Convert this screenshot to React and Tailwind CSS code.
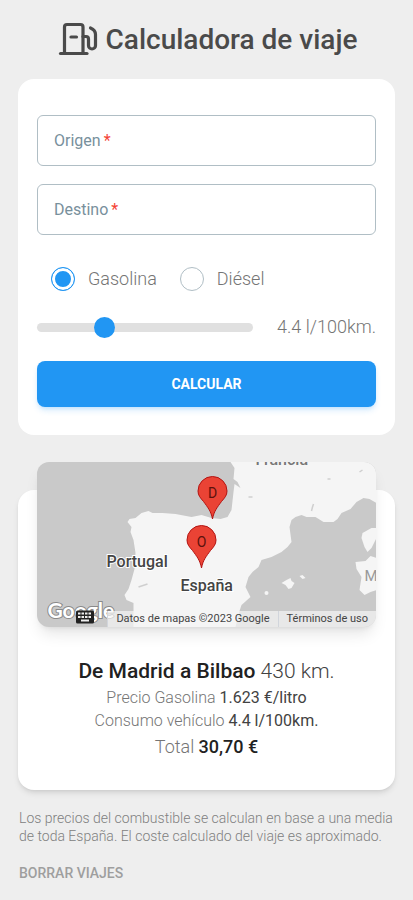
import { useState } from "react";

const FUELS = [
  { id: "gasolina", label: "Gasolina" },
  { id: "diesel", label: "Diésel" },
];

function FuelPumpIcon() {
  return (
    <svg className="w-10 h-9 shrink-0" viewBox="0 0 40 36" fill="none" stroke="currentColor" strokeWidth="3.2" strokeLinecap="round" strokeLinejoin="round" aria-hidden="true">
      <path d="M6.5 31.5V5a2.500 2.500 0 0 1 2.500-2.500h13.500a2.500 2.500 0 0 1 2.500 2.500v26.500" />
      <path d="M2.500 31.500h26.500" />
      <path d="M13 15h5.500" />
      <path d="M25 14.500h3a2.500 2.500 0 0 1 2.500 2.500v6.500a3.500 3.500 0 0 0 7 0V12.500c0-3.500-1.500-5-5-6.500" />
    </svg>
  );
}

function KeyboardIcon() {
  return (
    <svg className="w-5 h-3.5" viewBox="0 0 20 14" aria-hidden="true">
      <rect x="1" y="0.500" width="18" height="13" rx="1.500" fill="#222" />
      <path d="M3 3.500h14M3 7h14" stroke="#eee" strokeWidth="2.200" strokeDasharray="2.500 1" />
      <path d="M6 10.500h8" stroke="#eee" strokeWidth="1.800" />
    </svg>
  );
}

function TextField({ id, label }) {
  return (
    <div className="relative">
      <input
        id={id}
        type="text"
        required
        placeholder=" "
        className="peer block w-full h-[51px] px-4 rounded-md border border-[#b0bec5] bg-white text-base text-gray-700 outline-none focus:border-[#2196f3]"
      />
      <label
        htmlFor={id}
        className="absolute left-[17px] inset-y-0 flex items-center gap-[3px] text-base text-[#78909c] pointer-events-none peer-[:not(:placeholder-shown)]:hidden"
      >
        {label}
        <span className="text-[#f44336]">*</span>
      </label>
    </div>
  );
}

function Pin({ x, y, letter }) {
  return (
    <g transform={`translate(${x} ${y})`}>
      <path
        d="M0 0C-1.500-8-5-12-9-17.500C-12-21-14.500-23.500-14.500-28a14.500 14.500 0 0 1 29 0C14.500-23.500 12-21 9-17.500C5-12 1.500-8 0 0Z"
        fill="#ea4335"
        stroke="#b31412"
        strokeWidth="1"
      />
      <text y="-21" textAnchor="middle" fontSize="14" fontWeight="400" fill="#5c120c">
        {letter}
      </text>
    </g>
  );
}

function TripMap() {
  return (
    <div className="relative mx-[19px] h-[165px] rounded-xl overflow-hidden bg-[#c9c9c9] shadow-lg">
      <svg className="block w-full h-full" viewBox="0 0 340 165" preserveAspectRatio="xMidYMid slice" role="img" aria-label="Mapa del viaje">
        <g fill="#f5f5f5">
          <path d="M97 165V141L90 138L88 133L92 127L95 118L98 107L99 91L97 78L94 70L95 65L91 60L93 57L99 56L105 51L112 49L116 51L126 51L139 52L155 55L165 53L175 56L184 57L191 55L195 48L197 30L198 22L204 26L201 20L197 17L198 6L194 0H340V41L333 37L327 36L320 40L314 47L305 51L301 57L297 60L287 60L279 55L270 55L265 53L259 55L255 58L253 65L255 80L251 85L245 90L235 95L225 98L222 105L216 110L212 115L209 125L214 135L205 143L202 152L199 165Z" />
          <path d="M335 66L326 71L325 76L328 85L331 90L335 86L340 76V66Z" />
          <path d="M334 94L329 99L319 100L320 107L325 115L323 128L328 133L334 130L340 128V96Z" />
          <path d="M245 121L250 118L254 116L255 119L258 121L255 126L252 127L249 123Z" />
          <path d="M263 114L266 113L269 116L266 117Z" />
          <circle cx="230" cy="131" r="2" />
        </g>
        <path d="M102 125l9-3M275 49l1-4 1-3M291 17h3M212 35h4M323 10l3-2" fill="none" stroke="#cfcfcf" strokeWidth="1.500" />
        <g fontFamily="Roboto, sans-serif">
          <g fontSize="16" fontWeight="500" fill="#444" stroke="#fff" strokeWidth="2" paintOrder="stroke">
            <text x="70" y="105">Portugal</text>
            <text x="144" y="129">España</text>
          </g>
          <text x="219" y="3" fontSize="16" fontWeight="500" fill="#777">Francia</text>
          <text x="328" y="119" fontSize="15" fontWeight="400" fill="#999">M</text>
          <Pin x={176} y={57} letter="D" />
          <Pin x={165} y={106} letter="O" />
        </g>
        <text x="11" y="156" fontFamily="Lato, sans-serif" fontSize="21" fontWeight="700" fill="#fff" stroke="#8a8a8a" strokeWidth="2" paintOrder="stroke">
          Google
        </text>
      </svg>
      <div className="absolute right-0 bottom-0 flex items-center h-4 text-[11px] font-normal text-[#444]">
        <button type="button" aria-label="Combinaciones de teclas" className="flex pr-3 pb-1">
          <KeyboardIcon />
        </button>
        <span className="px-2 border-l border-gray-300 bg-[#f5f5f5]/70 whitespace-nowrap">Datos de mapas ©2023 Google</span>
        <a href="#terminos" className="px-2 border-l border-gray-300 bg-[#f5f5f5]/70 whitespace-nowrap">Términos de uso</a>
      </div>
    </div>
  );
}

export default function App() {
  const [fuel, setFuel] = useState("gasolina");
  const [consumption, setConsumption] = useState(4.4);

  return (
    <div className="min-h-screen bg-[#eeeeee] px-[18px] pt-5 pb-4 font-['Roboto',sans-serif]">
      {/* Title */}
      <header className="flex items-center justify-center gap-2 pl-0.5 text-[#4a4a4a]">
        <FuelPumpIcon />
        <h1 className="text-[28px] leading-10 font-medium whitespace-nowrap">Calculadora de viaje</h1>
      </header>

      {/* Trip form */}
      <form className="mt-[19px] px-[19px] pt-9 pb-7 rounded-2xl bg-white" onSubmit={(e) => e.preventDefault()}>
        <div className="flex flex-col gap-[18px]">
          <TextField id="origen" label="Origen" />
          <TextField id="destino" label="Destino" />
        </div>

        <div className="mt-8 ml-[14px] flex gap-[23px]">
          {FUELS.map((f) => (
            <label key={f.id} className="flex items-center gap-[13px] text-lg leading-6 font-light text-[#757575]">
              <input
                type="radio"
                name="fuel"
                value={f.id}
                checked={fuel === f.id}
                onChange={() => setFuel(f.id)}
                className="appearance-none size-6 rounded-full border border-[#b0bec5] bg-white checked:border-[#2196f3] checked:bg-[#2196f3] checked:shadow-[inset_0_0_0_3px_white]"
              />
              {f.label}
            </label>
          ))}
        </div>

        <div className="mt-6 flex items-center gap-6">
          <input
            type="range"
            aria-label="Consumo"
            min="0"
            max="15"
            step="0.1"
            value={consumption}
            onChange={(e) => setConsumption(Number(e.target.value))}
            className="appearance-none flex-1 min-w-0 h-[9px] rounded-full bg-[#e0e0e0] [&::-webkit-slider-thumb]:appearance-none [&::-webkit-slider-thumb]:size-[21px] [&::-webkit-slider-thumb]:rounded-full [&::-webkit-slider-thumb]:bg-[#2196f3]"
          />
          <output className="text-lg leading-6 font-light text-[#757575]">{consumption.toFixed(1)} l/100km.</output>
        </div>

        <button type="submit" className="mt-[22px] block w-full h-[46px] rounded-lg bg-[#2196f3] text-sm font-bold text-white shadow-md shadow-[#2196f3]/20">
          CALCULAR
        </button>
      </form>

      {/* Trip result */}
      <section className="flow-root mt-[55px] rounded-2xl bg-white shadow-md pb-[29px] text-center font-light text-[#757575]">
        <div className="-mt-7">
          <TripMap />
        </div>
        <h2 className="mt-[30px] text-[21px] leading-7 text-[#424242]">
          <strong className="font-medium text-[#212121]">De Madrid a Bilbao</strong> 430 km.
        </h2>
        <p className="mt-px text-base leading-[23px]">
          Precio Gasolina <span className="font-normal text-[#424242]">1.623 €/litro</span>
        </p>
        <p className="text-base leading-[23px]">
          Consumo vehículo <span className="font-normal text-[#424242]">4.4 l/100km.</span>
        </p>
        <p className="mt-px text-lg leading-7">
          Total <strong className="font-medium text-[#212121]">30,70 €</strong>
        </p>
      </section>

      <footer className="mt-[19px] -mr-1 pl-px text-sm text-[#9e9e9e]">
        <p className="leading-[18px] font-light text-[#808080]">
          Los precios del combustible se calculan en base a una media de toda España. El coste calculado del viaje es aproximado.
        </p>
        <button type="button" className="mt-[18px] block font-medium leading-5">
          BORRAR VIAJES
        </button>
      </footer>
    </div>
  );
}
